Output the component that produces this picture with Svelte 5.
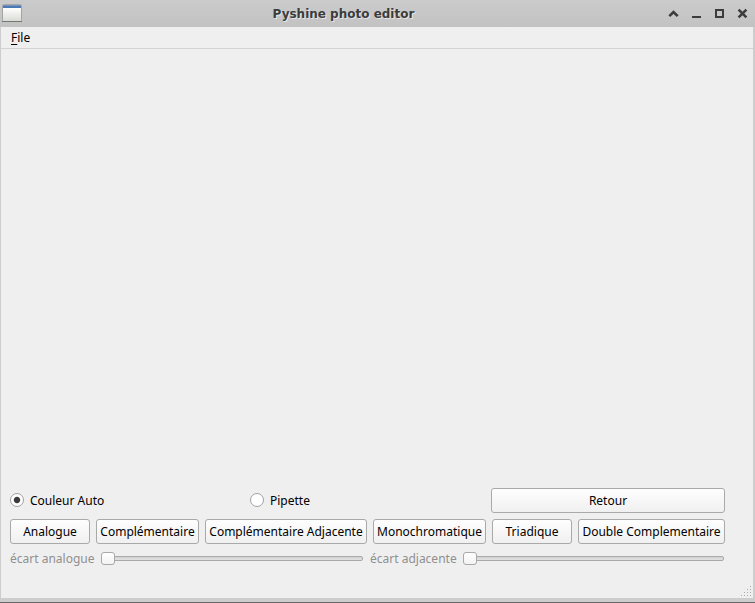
<script>
  const harmonies = [
    { label: 'Analogue', width: 80 },
    { label: 'Complémentaire', width: 103 },
    { label: 'Complémentaire Adjacente', width: 162 },
    { label: 'Monochromatique', width: 113 },
    { label: 'Triadique', width: 80 },
    { label: 'Double Complementaire', width: 147 }
  ];
  const gripDots = [[9, 0], [6, 3], [9, 3], [3, 6], [6, 6], [9, 6], [0, 9], [3, 9], [6, 9], [9, 9]];
  let mode = $state('auto');
</script>

<div class="window">
  <header>
    <svg class="app" width="22" height="19" viewBox="0 0 22 19">
      <defs>
        <linearGradient id="paper" x2="0" y2="1">
          <stop stop-color="#fff" /><stop offset="1" stop-color="#d9dcd5" />
        </linearGradient>
      </defs>
      <rect x=".5" y=".5" width="19" height="17" rx="1" fill="#eee" stroke="#a5a5a5" />
      <rect x="1" y="4" width="18" height="13" fill="url(#paper)" />
      <rect x="1" y="2" width="18" height="2" fill="#4c78b4" />
      <rect x="1" y="1" width="18" height="1" fill="#7596c1" />
      <rect x="0" y="17" width="20" height="1" fill="#777" />
    </svg>
    <h1>Pyshine photo editor</h1>
    <svg class="controls" width="81" height="11" viewBox="0 0 81 11">
      <g fill="none" stroke="#3c3c3c">
        <path d="M1.3 8.2 5.5 4l4.2 4.2" stroke-width="2.6" />
        <path d="M24 9h9" stroke-width="2" />
        <rect x="48" y="2" width="7" height="7" stroke-width="2" />
        <path d="m70.6 1.6 7.8 7.8m0-7.8-7.8 7.8" stroke-width="2.6" />
      </g>
    </svg>
  </header>
  <div class="body">
    <nav><span class="file"><u>F</u>ile</span></nav>
    <main>
      <div class="canvas"></div>
      <div class="modes">
        <label><input type="radio" value="auto" bind:group={mode} /><span>Couleur Auto</span></label>
        <label><input type="radio" value="pick" bind:group={mode} /><span>Pipette</span></label>
        <button class="back">Retour</button>
      </div>
      <div class="harmonies">
        {#each harmonies as h}
          <button style:width="{h.width}px">{h.label}</button>
        {/each}
      </div>
      <div class="sliders">
        <span class="name first">écart analogue</span>
        <div class="slider one"><i class="handle"></i><i class="groove"></i></div>
        <span class="name second">écart adjacente</span>
        <div class="slider two"><i class="handle"></i><i class="groove"></i></div>
      </div>
    </main>
    <svg class="grip" width="10" height="10" viewBox="0 0 10 10">
      {#each gripDots as [x, y]}
        <rect {x} {y} width="1" height="1" fill="#aaa" />
      {/each}
    </svg>
  </div>
</div>

<style>
  * { box-sizing: border-box; }
  .window {
    width: 755px;
    height: 603px;
    display: flex;
    flex-direction: column;
    padding-bottom: 4px;
    border-bottom: 1px solid #666;
    background: #cdcdcd;
    font: 12px/18px "Noto Sans", sans-serif;
    color: #000;
    overflow: hidden;
  }
  header {
    height: 27px;
    flex: none;
    display: flex;
    align-items: center;
    background: linear-gradient(#cbcbcb, #c2c2c2);
  }
  .app { margin-left: 2px; }
  h1 {
    flex: 1;
    margin: 0 0 0 -5px;
    text-align: center;
    font: bold 12px/18px "DejaVu Sans", sans-serif;
    color: #3c3c3c;
    text-shadow: 1px 1px #e6e6e6;
  }
  .controls { margin-right: 6px; }
  .body {
    position: relative;
    flex: 1;
    display: flex;
    flex-direction: column;
    margin: 0 2px 0 1px;
    background: #efefef;
  }
  nav { height: 22px; padding: 2px 10px; border-bottom: 1px solid #d3d3d3; }
  u { text-underline-offset: 2px; }
  main { flex: 1; display: flex; flex-direction: column; padding: 0 9px; }
  .canvas { height: 439px; }
  .modes { display: flex; height: 25px; align-items: center; }
  label { width: 240px; height: 25px; display: flex; align-items: center; gap: 6px; }
  .modes label:nth-child(2) { width: 241px; }
  input {
    appearance: none;
    width: 14px;
    height: 14px;
    margin: 0 0 1px;
    border: 1px solid #a2a2a2;
    border-radius: 50%;
    background: #fff;
  }
  input:checked { background: radial-gradient(circle, #3b3b3b 2.7px, #fff 3.7px); }
  button {
    height: 25px;
    padding: 0;
    border: 1px solid #a9a9a9;
    border-radius: 3px;
    background: linear-gradient(#fefefe, #f0f0f0);
    font: inherit;
    color: #000;
    white-space: nowrap;
  }
  .back { width: 234px; }
  .harmonies { display: flex; gap: 6px; margin-top: 6px; }
  .sliders { display: flex; align-items: center; height: 18px; margin-top: 6px; color: #909090; }
  .name { white-space: nowrap; }
  .first { width: 91px; }
  .second { width: 93px; margin-left: 7px; }
  .slider { display: flex; align-items: center; height: 13px; margin-bottom: 1px; }
  .one { width: 262px; }
  .two { width: 261px; }
  .handle {
    width: 14px;
    height: 13px;
    border: 1px solid #a9a9a9;
    border-radius: 3px;
    background: linear-gradient(#fefefe, #f3f3f3);
  }
  .groove {
    flex: 1;
    height: 5px;
    margin-left: -1px;
    border: 1px solid #a9a9a9;
    border-radius: 0 2px 2px 0;
    background: linear-gradient(#d2d2d2, #e2e2e2);
  }
  .grip { position: absolute; right: 2px; bottom: 2px; }
</style>
